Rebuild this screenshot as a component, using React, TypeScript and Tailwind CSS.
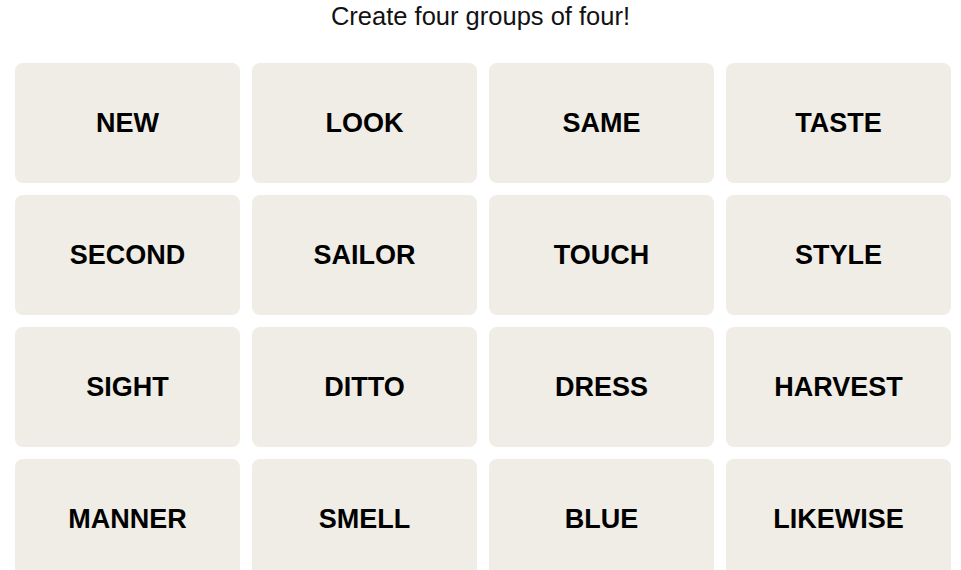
var WORDS = [
  "NEW", "LOOK", "SAME", "TASTE",
  "SECOND", "SAILOR", "TOUCH", "STYLE",
  "SIGHT", "DITTO", "DRESS", "HARVEST",
  "MANNER", "SMELL", "BLUE", "LIKEWISE",
];

// single word card in the board
function Tile({ word }: { word: string }) {
  return (
    <button className="flex h-[120px] w-[225px] items-center justify-center rounded-[8px] bg-[#efede6] pt-[1px] text-[27px] font-bold text-black">
      {word}
    </button>
  );
}

export default function App() {
  return (
    <div className="min-h-[570px] bg-white font-['Liberation_Sans',Arial,sans-serif]">
      <h1 className="h-[30px] pt-[1px] text-center text-[25.5px] leading-[30px] font-normal text-[#121212]">
        Create four groups of four!
      </h1>
      <div className="mt-[33px] grid grid-cols-[repeat(4,225px)] gap-[12px] pl-[15px]">
        {WORDS.map(function (w) {
          return <Tile key={w} word={w} />;
        })}
      </div>
    </div>
  );
}
